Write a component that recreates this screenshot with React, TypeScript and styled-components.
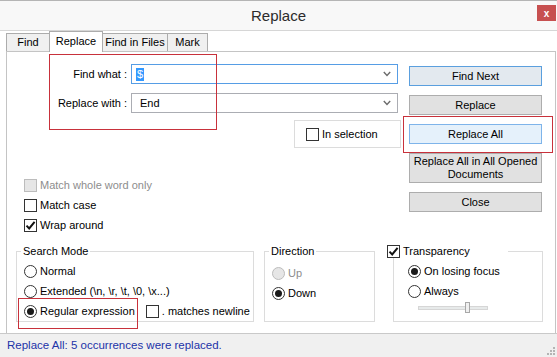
import styled, { createGlobalStyle } from "styled-components";

const GlobalStyle = createGlobalStyle`
  html, body {
    margin: 0;
    padding: 0;
    background: #ffffff;
  }
  body {
    font-family: "Liberation Sans", Arial, sans-serif;
    font-size: 11px;
    color: #000;
  }
  * {
    box-sizing: border-box;
  }
`;

const Window = styled.div`
  width: 557px;
  height: 357px;
  display: flex;
  flex-direction: column;
  background: #ffffff;
  border-top: 1px solid #b5b5b5;
  overflow: hidden;
`;

const TitleBar = styled.div`
  height: 30px;
  display: grid;
  grid-template-columns: 1fr auto 1fr;
  background: #f8f8f8;
  border-bottom: 1px solid #d6d6d6;
`;

const Title = styled.div`
  grid-column: 2;
  font-size: 15px;
  line-height: 29px;
  color: #2b2b2b;
`;

const CloseButton = styled.div`
  justify-self: end;
  width: 19px;
  height: 16px;
  margin: 4px 1px 0 0;
  background: #c75050;
  color: #fff;
  font-size: 10px;
  font-weight: bold;
  display: flex;
  align-items: center;
  justify-content: center;
`;

const TabStrip = styled.div`
  height: 20px;
  display: flex;
  align-items: flex-end;
  padding-left: 6px;
  position: relative;
  z-index: 1;
`;

const Tab = styled.div<{ $active?: boolean; $width: number }>`
  width: ${(p) => p.$width}px;
  height: ${(p) => (p.$active ? "21px" : "18px")};
  margin-bottom: ${(p) => (p.$active ? "-1px" : "0")};
  margin-right: -1px;
  padding-top: ${(p) => (p.$active ? "2px" : "1px")};
  border: 1px solid #acacac;
  border-bottom: none;
  background: ${(p) => (p.$active ? "#ffffff" : "#f0f0f0")};
  line-height: 15px;
  text-align: center;
  color: #000;
  z-index: ${(p) => (p.$active ? 2 : 1)};
`;

const Panel = styled.div`
  flex: 1;
  margin: 0 1px 0 6px;
  border: 1px solid #c4c4c4;
  border-bottom: none;
  background: #ffffff;
  position: relative;
  display: flex;
  flex-direction: column;
`;

const TopSection = styled.div`
  display: flex;
  height: 183px;
`;

const LeftColumn = styled.div`
  width: 394px;
  display: flex;
  flex-direction: column;
`;

const FormGrid = styled.div`
  margin-top: 12px;
  display: grid;
  grid-template-columns: 121px 267px;
  column-gap: 3px;
  row-gap: 9px;
  align-items: center;
`;

const FieldLabel = styled.div`
  text-align: right;
  padding-right: 1px;
`;

const Combo = styled.div<{ $focused?: boolean }>`
  height: 20px;
  border: 1px solid ${(p) => (p.$focused ? "#569de5" : "#abadb3")};
  display: flex;
  align-items: center;
  justify-content: space-between;
  padding: 0 6px 0 4px;
  background: #fff;
`;

const ComboText = styled.span<{ $selected?: boolean }>`
  padding: 0 1px;
  line-height: 13px;
  background: ${(p) => (p.$selected ? "#3399ff" : "transparent")};
  color: ${(p) => (p.$selected ? "#ffffff" : "#000")};
  margin-left: ${(p) => (p.$selected ? "0" : "3px")};
`;

const InSelectionBox = styled.div`
  margin: 7px 0 0 287px;
  width: 107px;
  height: 28px;
  border: 1px solid #dcdcdc;
  display: flex;
  align-items: center;
  padding-left: 11px;
`;

const OptionList = styled.div`
  margin-top: 27px;
  padding-left: 17px;
  display: flex;
  flex-direction: column;
`;

const OptionRow = styled.label<{ $disabled?: boolean }>`
  height: 20px;
  display: flex;
  align-items: center;
  gap: 3px;
  color: ${(p) => (p.$disabled ? "#8d8d8d" : "#000")};
  white-space: nowrap;
`;

const Box = styled.span<{ $disabled?: boolean }>`
  width: 13px;
  height: 13px;
  flex: none;
  border: 1px solid ${(p) => (p.$disabled ? "#bcbcbc" : "#333333")};
  background: ${(p) => (p.$disabled ? "#e6e6e6" : "#ffffff")};
  display: flex;
  align-items: center;
  justify-content: center;
`;

const Round = styled.span<{ $disabled?: boolean }>`
  width: 13px;
  height: 13px;
  flex: none;
  border-radius: 50%;
  border: 1px solid ${(p) => (p.$disabled ? "#bcbcbc" : "#333333")};
  background: ${(p) => (p.$disabled ? "#e6e6e6" : "#ffffff")};
  display: flex;
  align-items: center;
  justify-content: center;
`;

const Dot = styled.span`
  width: 7px;
  height: 7px;
  border-radius: 50%;
  background: #1a1a1a;
`;

const RightColumn = styled.div`
  margin-left: 8px;
  width: 133px;
  padding-top: 14px;
  display: flex;
  flex-direction: column;
  gap: 9px;
`;

const Button = styled.div<{ $variant?: "default" | "hot"; $tall?: boolean }>`
  height: ${(p) => (p.$tall ? "30px" : "20px")};
  border: 1px solid
    ${(p) => (p.$variant === "default" ? "#5a9fde" : p.$variant === "hot" ? "#7eb4ea" : "#adadad")};
  background: ${(p) => (p.$variant === "default" ? "#e3e9ef" : p.$variant === "hot" ? "#e5f1fb" : "#e1e1e1")};
  display: flex;
  align-items: center;
  justify-content: center;
  text-align: center;
  line-height: 13px;
  padding: 0 2px;
`;

const GroupsRow = styled.div`
  margin-top: 9px;
  padding-left: 9px;
  display: flex;
`;

const Group = styled.fieldset<{ $width: number; $gap: number }>`
  margin: 0 ${(p) => p.$gap}px 0 0;
  padding: 0;
  width: ${(p) => p.$width}px;
  height: 78px;
  min-width: 0;
  border: 1px solid #dcdcdc;
`;

const Legend = styled.legend<{ $shift?: number; $tail?: number }>`
  margin-left: ${(p) => p.$shift ?? 4}px;
  padding: 0 ${(p) => p.$tail ?? 2}px 0 2px;
  line-height: 14px;
  font-size: 11px;
`;

const LegendCheck = styled.span`
  display: flex;
  align-items: center;
  gap: 3px;
  margin-left: -2px;
`;

const GroupBody = styled.div<{ $indent: number; $top?: number }>`
  padding-left: ${(p) => p.$indent}px;
  margin-top: ${(p) => p.$top ?? 3}px;
  display: flex;
  flex-direction: column;
`;

const InlineOptions = styled.div`
  display: flex;
  gap: 11px;
`;

const SliderRow = styled.div`
  height: 11px;
  margin-top: 1px;
  padding-left: 10px;
  display: flex;
  align-items: center;
`;

const SliderTrack = styled.div`
  width: 70px;
  height: 4px;
  border: 1px solid #d6d6d6;
  background: #e7eaea;
  display: flex;
  align-items: center;
  padding-left: 46px;
`;

const SliderThumb = styled.div`
  width: 5px;
  height: 11px;
  flex: none;
  border: 1px solid #a8a8a8;
  background: #f0f0f0;
`;

const Annotation = styled.div`
  position: absolute;
  border: 1px solid #c8313b;
  pointer-events: none;
`;

const StatusBar = styled.div`
  height: 24px;
  border-top: 1px solid #c9c9c9;
  background: #f0f0f0;
  display: flex;
  align-items: center;
  justify-content: space-between;
  padding-left: 7px;
  position: relative;
`;

const StatusText = styled.span`
  color: #2233a8;
  font-size: 11.5px;
  margin-top: -1px;
`;

const Grip = styled.svg`
  align-self: flex-end;
  margin: 0 2px 2px 0;
`;

function Check() {
  return (
    <svg width="11" height="11" viewBox="0 0 11 11">
      <path d="M1.5 5.6 L4.2 8.4 L9.6 1.9" fill="none" stroke="#111" strokeWidth="2" />
    </svg>
  );
}

function Chevron() {
  return (
    <svg width="8" height="6" viewBox="0 0 8 6">
      <path d="M0.8 1 L4 4.4 L7.2 1" fill="none" stroke="#6b6b6b" strokeWidth="1.4" />
    </svg>
  );
}

function CheckOption({ label, checked, disabled }: { label: string; checked?: boolean; disabled?: boolean }) {
  return (
    <OptionRow $disabled={disabled}>
      <Box $disabled={disabled}>{checked && <Check />}</Box>
      {label}
    </OptionRow>
  );
}

function RadioOption({ label, checked, disabled }: { label: string; checked?: boolean; disabled?: boolean }) {
  return (
    <OptionRow $disabled={disabled}>
      <Round $disabled={disabled}>{checked && <Dot />}</Round>
      {label}
    </OptionRow>
  );
}

export default function App() {
  return (
    <>
      <GlobalStyle />
      <Window>
        <TitleBar>
          <Title>Replace</Title>
          <CloseButton>x</CloseButton>
        </TitleBar>

        <TabStrip>
          <Tab $width={44}>Find</Tab>
          <Tab $width={54} $active>
            Replace
          </Tab>
          <Tab $width={66}>Find in Files</Tab>
          <Tab $width={41}>Mark</Tab>
        </TabStrip>

        <Panel>
          <TopSection>
            <LeftColumn>
              <FormGrid>
                <FieldLabel>Find what :</FieldLabel>
                <Combo $focused>
                  <ComboText $selected>$</ComboText>
                  <Chevron />
                </Combo>
                <FieldLabel>Replace with :</FieldLabel>
                <Combo>
                  <ComboText>End</ComboText>
                  <Chevron />
                </Combo>
              </FormGrid>

              <InSelectionBox>
                <CheckOption label="In selection" />
              </InSelectionBox>

              <OptionList>
                <CheckOption label="Match whole word only" disabled />
                <CheckOption label="Match case" />
                <CheckOption label="Wrap around" checked />
              </OptionList>
            </LeftColumn>

            <RightColumn>
              <Button $variant="default">Find Next</Button>
              <Button>Replace</Button>
              <Button $variant="hot">Replace All</Button>
              <Button $tall>
                Replace All in All Opened
                <br />
                Documents
              </Button>
              <Button>Close</Button>
            </RightColumn>
          </TopSection>

          <GroupsRow>
            <Group $width={238} $gap={10}>
              <Legend>Search Mode</Legend>
              <GroupBody $indent={7}>
                <RadioOption label="Normal" />
                <RadioOption label="Extended (\n, \r, \t, \0, \x...)" />
                <InlineOptions>
                  <RadioOption label="Regular expression" checked />
                  <CheckOption label=". matches newline" />
                </InlineOptions>
              </GroupBody>
            </Group>

            <Group $width={111} $gap={18}>
              <Legend>Direction</Legend>
              <GroupBody $indent={7} $top={5}>
                <RadioOption label="Up" disabled />
                <RadioOption label="Down" checked />
              </GroupBody>
            </Group>

            <Group $width={150} $gap={0}>
              <Legend $shift={-7} $tail={38}>
                <LegendCheck>
                  <Box>
                    <Check />
                  </Box>
                  Transparency
                </LegendCheck>
              </Legend>
              <GroupBody $indent={14}>
                <RadioOption label="On losing focus" checked />
                <RadioOption label="Always" />
                <SliderRow>
                  <SliderTrack>
                    <SliderThumb />
                  </SliderTrack>
                </SliderRow>
              </GroupBody>
            </Group>
          </GroupsRow>

          <Annotation style={{ left: 42, top: 2, width: 168, height: 76 }} />
          <Annotation style={{ left: 396, top: 64, width: 150, height: 37 }} />
          <Annotation style={{ left: 11, top: 246, width: 120, height: 31 }} />
        </Panel>

        <StatusBar>
          <StatusText>Replace All: 5 occurrences were replaced.</StatusText>
          <Grip width="10" height="10" viewBox="0 0 10 10">
            <rect x="8" y="2" width="2" height="2" fill="#b4b4b4" />
            <rect x="5" y="5" width="2" height="2" fill="#b4b4b4" />
            <rect x="8" y="5" width="2" height="2" fill="#b4b4b4" />
            <rect x="2" y="8" width="2" height="2" fill="#b4b4b4" />
            <rect x="5" y="8" width="2" height="2" fill="#b4b4b4" />
            <rect x="8" y="8" width="2" height="2" fill="#b4b4b4" />
          </Grip>
        </StatusBar>
      </Window>
    </>
  );
}
